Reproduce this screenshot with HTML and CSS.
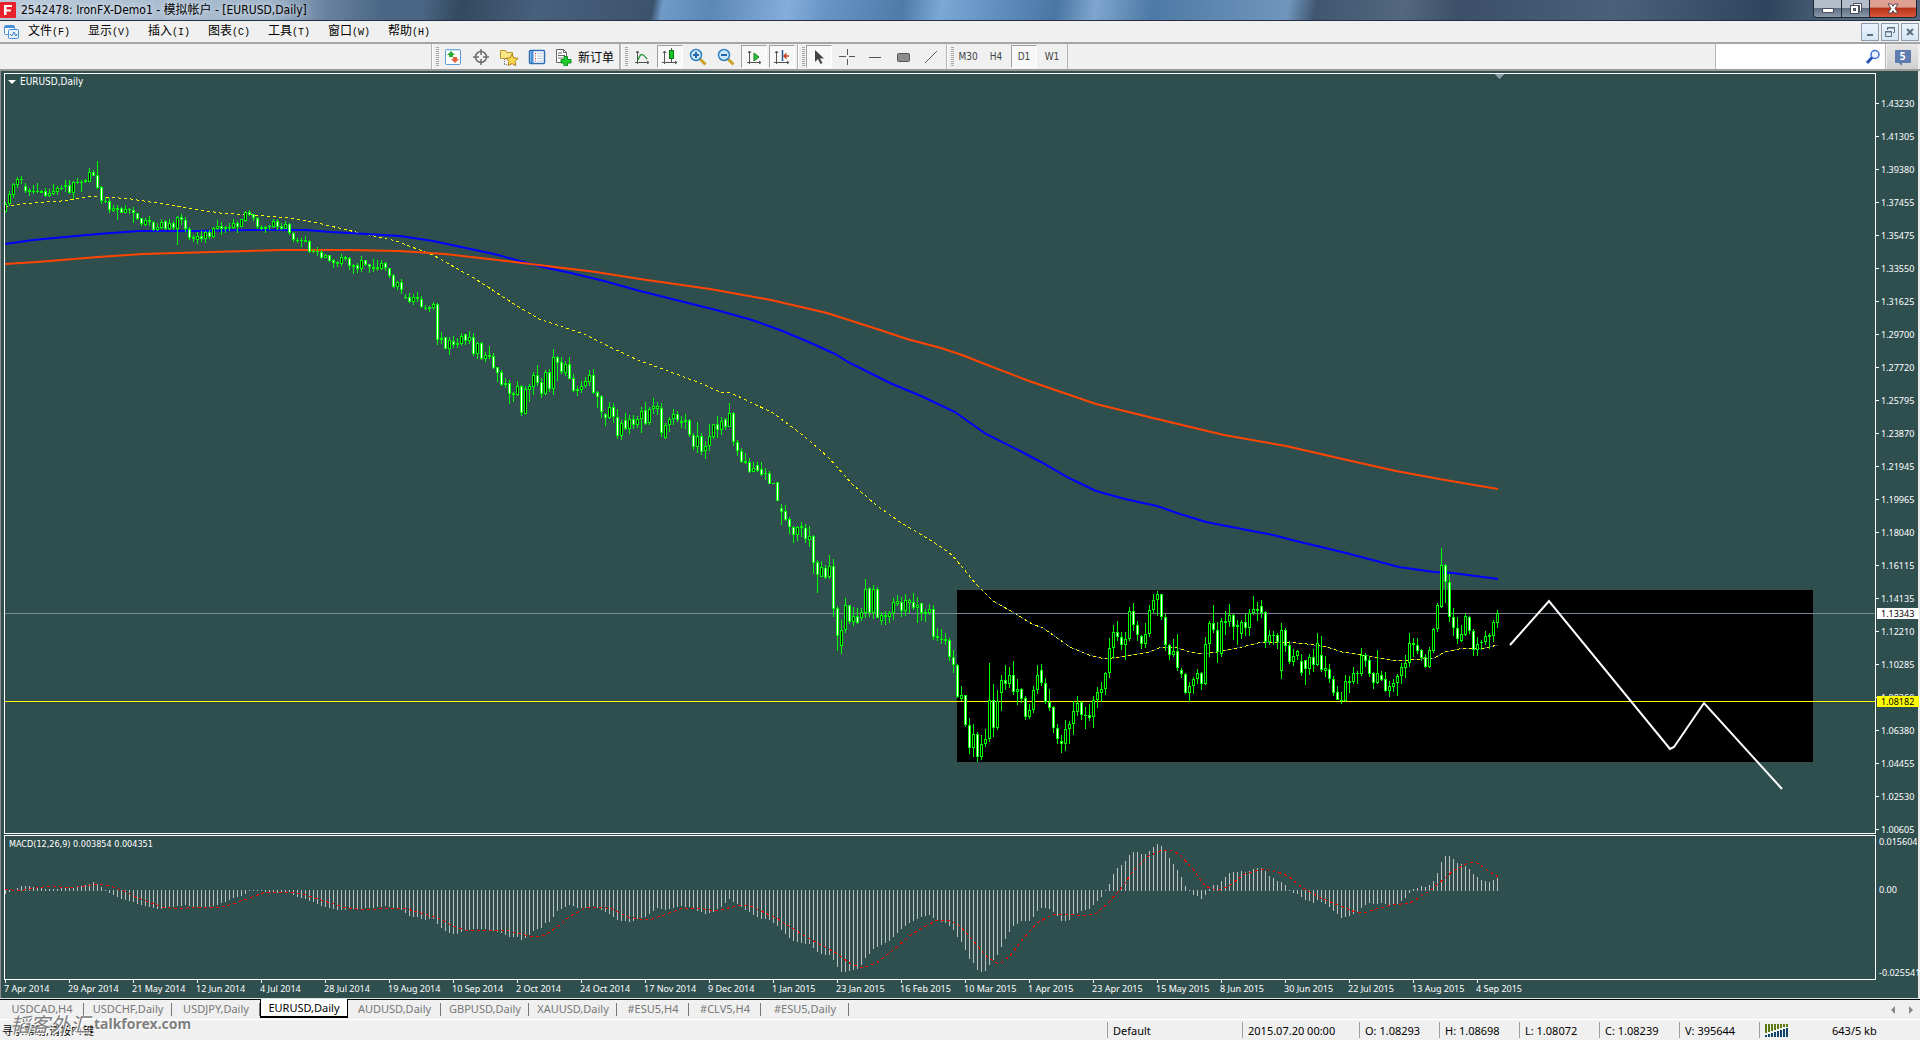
FILE: index.html
```html
<!DOCTYPE html>
<html lang="zh-CN">
<head>
<meta charset="utf-8">
<title>2542478: IronFX-Demo1 - 模拟帐户 - [EURUSD,Daily]</title>
<link rel="stylesheet" href="styles.css">
</head>
<body>
<div class="app">
  <header class="titlebar">
    <svg class="app-icon" viewBox="0 0 16 16" width="16" height="16"><rect width="16" height="16" rx="1" fill="#e8202c"/><path d="M4 3h8v2H6.500v2.500H11v2H6.500V13H4z" fill="#fff"/></svg>
    <h1 class="title">2542478: IronFX-Demo1 - 模拟帐户 - [EURUSD,Daily]</h1>
    <div class="window-buttons">
      <button class="wb" aria-label="最小化"><svg width="14" height="12" viewBox="0 0 14 12"><rect x="1.500" y="5.500" width="11" height="4" fill="#fff" stroke="#4a5060"/></svg></button>
      <button class="wb" aria-label="还原"><svg width="14" height="14" viewBox="0 0 14 14"><path d="M4.500 1.500h8v8h-2v-6h-6z" fill="#fff" stroke="#4a5060"/><rect x="1.500" y="3.500" width="8" height="8" fill="#fff" stroke="#4a5060"/><rect x="4.500" y="6.500" width="2" height="2" fill="#8a94a6" stroke="#4a5060"/></svg></button>
      <button class="wb wb-close" aria-label="关闭"><svg width="14" height="12" viewBox="0 0 14 12"><path d="M2 1h3.500L7 3.300 8.500 1H12L9 5.500l3 4.500H8.500L7 7.700 5.500 10H2l3-4.500z" fill="#fff" stroke="#5a4048"/></svg></button>
    </div>
  </header>

  <nav class="menubar">
    <svg class="doc-icon" width="16" height="16" viewBox="0 0 16 16"><rect x=".5" y="1.500" width="10" height="9" rx="1" fill="#fff" stroke="#4a90d9"/><path d="M1 3h9" stroke="#4a90d9" stroke-width="2"/><rect x="4.500" y="5.500" width="10" height="9" rx="1" fill="#e8f2fc" stroke="#4a90d9"/><path d="M6 10l2 2 2-4 2 4 1-2" fill="none" stroke="#3c7cc8"/></svg>
    <button class="menu">文件<span class="key">(F)</span></button>
    <button class="menu">显示<span class="key">(V)</span></button>
    <button class="menu">插入<span class="key">(I)</span></button>
    <button class="menu">图表<span class="key">(C)</span></button>
    <button class="menu">工具<span class="key">(T)</span></button>
    <button class="menu">窗口<span class="key">(W)</span></button>
    <button class="menu">帮助<span class="key">(H)</span></button>
    <div class="mdi-buttons">
      <button class="mdi" aria-label="最小化图表"><svg width="12" height="12" viewBox="0 0 12 12"><path d="M3 9h6" stroke="#5c6f80" stroke-width="2"/></svg></button>
      <button class="mdi" aria-label="还原图表"><svg width="12" height="12" viewBox="0 0 12 12"><path d="M3.500 4V1.500h7v5H9M3 2h8M1.500 5.500h6v5h-6zM1 6h7" fill="none" stroke="#5c6f80"/></svg></button>
      <button class="mdi" aria-label="关闭图表"><svg width="12" height="12" viewBox="0 0 12 12"><path d="M3 3l6 6M9 3l-6 6" stroke="#5c6f80" stroke-width="2"/></svg></button>
    </div>
  </nav>

  <div class="toolbar">
    <div class="group group-first">
      <span class="grip"></span>
      <button class="tool" aria-label="市场报价"><svg width="18" height="18" viewBox="0 0 18 18"><rect x="1.500" y="1.500" width="15" height="15" rx="1" fill="#fff" stroke="#5b9ad5"/><path d="M2 2h14" stroke="#8fc0ea"/><path d="M7 3l4 4H9v2H5V7H3z" fill="#2fae3c"/><path d="M11 15l4-4h-2V9H9v2H7z" fill="#e2603c"/></svg></button>
      <button class="tool" aria-label="数据窗口"><svg width="18" height="18" viewBox="0 0 18 18"><circle cx="9" cy="9" r="5.500" fill="none" stroke="#6c6c6c" stroke-width="1.500"/><path d="M9 1v6M9 11v6M1 9h6M11 9h6" stroke="#6c6c6c" stroke-width="1.500"/></svg></button>
      <button class="tool" aria-label="导航"><svg width="20" height="18" viewBox="0 0 20 18"><path d="M1.500 2.500h5l1 2h6v6h-12z" fill="#fbe68a" stroke="#b8962c"/><path d="M5.500 11v6M5 16.500h5" stroke="#777" stroke-dasharray="1 1"/><path d="M13 6l1.800 3.800 4.200.6-3 3 .8 4.200L13 15.600 9.200 17.600l.8-4.200-3-3 4.200-.6z" fill="#fcd94c" stroke="#a8801c"/></svg></button>
      <button class="tool" aria-label="终端"><svg width="18" height="18" viewBox="0 0 18 18"><rect x="1.500" y="2.500" width="15" height="13" rx="1" fill="#fff" stroke="#2f6fb5" stroke-width="1.500"/><path d="M4 3v12" stroke="#4a90d9" stroke-width="3"/><path d="M7 5.500h1M7 8h1M7 10.500h1M7 13h1" stroke="#e03030"/><path d="M9 5.500h6M9 8h6M9 10.500h6M9 13h6" stroke="#b8cbe2"/></svg></button>
      <button class="tool tool-order"><svg width="18" height="18" viewBox="0 0 18 18"><path d="M2.500 1.500h7l3 3v10h-10z" fill="#fff" stroke="#666"/><path d="M9.500 1.500v3h3M4 5h4M4 7.500h7M4 10h5" fill="none" stroke="#666"/><path d="M10 8.500h3.500v3H17V15h-3.500v3H10v-3H7v-3.500h3z" fill="#1fcf2f" stroke="#118a1c"/></svg>新订单</button>
    </div>
    <div class="group">
      <span class="grip"></span>
      <button class="tool" aria-label="折线图"><svg width="18" height="18" viewBox="0 0 18 18"><path d="M4.500 3v13M2 14.500h14M3 5l1.500-2L6 5M14 13l2 1.500-2 1.500" fill="none" stroke="#555"/><path d="M5 12c3-8 5-6 9-1" fill="none" stroke="#2a9c3a" stroke-width="1.500"/></svg></button>
      <button class="tool pressed" aria-label="蜡烛图"><svg width="18" height="18" viewBox="0 0 18 18"><path d="M3.500 3v13M1 14.500h15M2 5l1.500-2L5 5M14 13l2 1.500-2 1.500M10.500 0v14" fill="none" stroke="#555"/><rect x="8.500" y="2.500" width="4" height="8" fill="#16c42a" stroke="#0b7a17"/></svg></button>
      <button class="tool" aria-label="放大"><svg width="18" height="18" viewBox="0 0 18 18"><path d="M10 10l6.500 6.500" stroke="#c9a227" stroke-width="3"/><circle cx="7" cy="7" r="5.500" fill="#cfe9fb" stroke="#2c7fc0" stroke-width="1.500"/><path d="M4 7h6M7 4v6" stroke="#2068a8" stroke-width="2"/></svg></button>
      <button class="tool" aria-label="缩小"><svg width="18" height="18" viewBox="0 0 18 18"><path d="M10 10l6.500 6.500" stroke="#c9a227" stroke-width="3"/><circle cx="7" cy="7" r="5.500" fill="#cfe9fb" stroke="#2c7fc0" stroke-width="1.500"/><path d="M4 7h6" stroke="#2068a8" stroke-width="2"/></svg></button>
      <button class="tool pressed" aria-label="自动滚动"><svg width="18" height="18" viewBox="0 0 18 18"><path d="M4.500 3v13M2 14.500h14M3 5l1.500-2L6 5M14 13l2 1.500-2 1.500" fill="none" stroke="#555"/><path d="M9 5l5 4-5 4z" fill="#2fc23c" stroke="#178022"/></svg></button>
      <button class="tool pressed" aria-label="图表平移"><svg width="18" height="18" viewBox="0 0 18 18"><path d="M3.500 3v13M1 14.500h15M2 5l1.500-2L5 5M14 13l2 1.500-2 1.500" fill="none" stroke="#555"/><path d="M9.500 2v11" stroke="#1d5c9c" stroke-width="1.500"/><path d="M11 8h5M13.500 5.500L11 8l2.500 2.500" fill="none" stroke="#c8401c" stroke-width="1.500"/></svg></button>
    </div>
    <div class="group">
      <span class="grip"></span>
      <button class="tool pressed" aria-label="光标"><svg width="18" height="18" viewBox="0 0 18 18"><path d="M5 2v12l3-3 2.500 5 2-1L10 10.500h4z" fill="#444"/></svg></button>
      <button class="tool" aria-label="十字准线"><svg width="18" height="18" viewBox="0 0 18 18"><path d="M9.500 1v6M9.500 11v6M1 8.500h7M11 8.500h6" stroke="#555"/></svg></button>
      <button class="tool" aria-label="水平线"><svg width="18" height="18" viewBox="0 0 18 18"><path d="M3 9.500h12" stroke="#555" stroke-width="1"/></svg></button>
      <button class="tool" aria-label="矩形"><svg width="18" height="18" viewBox="0 0 18 18"><rect x="3.500" y="5.500" width="12" height="8" rx="1" fill="#8c8c8c" stroke="#555"/></svg></button>
      <button class="tool" aria-label="趋势线"><svg width="18" height="18" viewBox="0 0 18 18"><path d="M3 15L15 3" stroke="#666"/></svg></button>
    </div>
    <div class="group group-last">
      <span class="grip"></span>
      <button class="tool">M30</button>
      <button class="tool">H4</button>
      <button class="tool pressed">D1</button>
      <button class="tool">W1</button>
    </div>
    <label class="search">
      <input type="text" aria-label="搜索">
      <svg width="16" height="16" viewBox="0 0 16 16"><circle cx="10" cy="5.500" r="4" fill="#eaf2ff" stroke="#3f6fd0" stroke-width="1.500"/><path d="M7 8.500L2 14" stroke="#2a55b8" stroke-width="3"/></svg>
    </label>
    <button class="chat" aria-label="消息"><span class="bubble">5</span></button>
  </div>

  <main class="chart">
    <section class="pane price-pane">
      <h2 class="pane-title symbol"><span class="arrow"></span>EURUSD,Daily</h2>
      <svg id="price" class="plot" viewBox="5 74 1870 759" preserveAspectRatio="none"></svg>
    </section>
    <div class="axis price-axis">
      <ol class="prices">
        <li>1.43230</li><li>1.41305</li><li>1.39380</li><li>1.37455</li><li>1.35475</li><li>1.33550</li><li>1.31625</li><li>1.29700</li><li>1.27720</li><li>1.25795</li><li>1.23870</li><li>1.21945</li><li>1.19965</li><li>1.18040</li><li>1.16115</li><li>1.14135</li><li>1.12210</li><li>1.10285</li><li>1.08360</li><li>1.06380</li><li>1.04455</li><li>1.02530</li><li>1.00605</li>
      </ol>
      <span class="tag tag-bid">1.13343</span>
      <span class="tag tag-line">1.08182</span>
    </div>
    <section class="pane macd-pane">
      <h2 class="pane-title">MACD(12,26,9) 0.003854 0.004351</h2>
      <svg id="macd" class="plot" viewBox="5 836 1870 143" preserveAspectRatio="none"></svg>
    </section>
    <div class="axis macd-axis"><span>0.015604</span><span class="zero">0.00</span><span>-0.025541</span></div>
    <ol class="dates">
      <li>7 Apr 2014</li><li>29 Apr 2014</li><li>21 May 2014</li><li>12 Jun 2014</li><li>4 Jul 2014</li><li>28 Jul 2014</li><li>19 Aug 2014</li><li>10 Sep 2014</li><li>2 Oct 2014</li><li>24 Oct 2014</li><li>17 Nov 2014</li><li>9 Dec 2014</li><li>1 Jan 2015</li><li>23 Jan 2015</li><li>16 Feb 2015</li><li>10 Mar 2015</li><li>1 Apr 2015</li><li>23 Apr 2015</li><li>15 May 2015</li><li>8 Jun 2015</li><li>30 Jun 2015</li><li>22 Jul 2015</li><li>13 Aug 2015</li><li>4 Sep 2015</li>
    </ol>
  </main>

  <div class="tabs">
    <button class="tab">USDCAD,H4</button>
    <button class="tab">USDCHF,Daily</button>
    <button class="tab">USDJPY,Daily</button>
    <button class="tab active">EURUSD,Daily</button>
    <button class="tab wide">AUDUSD,Daily</button>
    <button class="tab">GBPUSD,Daily</button>
    <button class="tab">XAUUSD,Daily</button>
    <button class="tab short">#ESU5,H4</button>
    <button class="tab short">#CLV5,H4</button>
    <button class="tab">#ESU5,Daily</button>
    <div class="tab-scroll">
      <button aria-label="向左滚动"><svg width="4" height="8" viewBox="0 0 4 8"><path d="M4 0v8L0 4z" fill="#888"/></svg></button>
      <button aria-label="向右滚动"><svg width="4" height="8" viewBox="0 0 4 8"><path d="M0 0v8l4-4z" fill="#888"/></svg></button>
    </div>
  </div>

  <footer class="status">
    <span class="help">寻求帮助,请按F1键</span>
    <span class="cell c-profile">Default</span>
    <span class="cell c-time">2015.07.20 00:00</span>
    <span class="cell c-num">O: 1.08293</span>
    <span class="cell c-num">H: 1.08698</span>
    <span class="cell c-num">L: 1.08072</span>
    <span class="cell c-num">C: 1.08239</span>
    <span class="cell c-num">V: 395644</span>
    <span class="cell c-net"><svg width="24" height="13" viewBox="0 0 24 13" shape-rendering="crispEdges"><path d="M1 0v9M4 0v8M7 0v7M10 0v6M13 0v5M16 0v4M19 0v3M22 0v3" stroke="#5c7a12" stroke-width="2"/><path d="M1 11v2M4 10v3M7 9v4M10 8v5M13 7v6M16 6v7M19 5v8M22 4v9" stroke="#0f4468" stroke-width="2"/></svg><span>643/5 kb</span></span>
    <div class="watermark"><span class="wm-cn">韬客外汇</span><span class="wm-en">talkforex.com</span></div>
  </footer>
</div>
<script src="chart.js"></script>
</body>
</html>
```
FILE: styles.css
```css
* { box-sizing: border-box; }
body, h1, h2, ol { margin: 0; padding: 0; }
ol { list-style: none; }
body {
  font-family: "Open Sans", "Noto Sans CJK SC", sans-serif;
  font-size: 12px;
  color: #000;
  background: #f0f0f0;
}
button { margin: 0; padding: 0; border: 0; background: none; font: inherit; color: inherit; }
.app { display: flex; flex-direction: column; min-height: 100vh; }

.titlebar {
  display: flex;
  align-items: center;
  height: 21px;
  border-bottom: 1px solid #22303f;
  background:
    linear-gradient(90deg, rgba(215,228,240,.8) 0, rgba(190,208,226,.75) 14%, rgba(150,172,198,.4) 17%, transparent 20%),
    linear-gradient(100deg, #4a6684 0, #4a6684 22%, #34495f 24%, #47607c 28%, #3c536d 34%, #6f9bc8 34.500%, #5c88b6 37%, #84addb 41%, #6794c4 43%, #4f7ba9 47%, #7ba9d6 49%, #5f8dbd 52%, #4a76a4 55%, #7ea6cf 57%, #4d79a6 60%, #7096bd 67%, #40566f 68.500%, #53687f 73%, #3b5068 76%, #4b6179 84%, #2f455d 92%, #53687f 96%);
}
.app-icon { flex: none; margin-right: 5px; }
.title { flex: 1; font-family: "DejaVu Sans Condensed", "Noto Sans CJK SC", sans-serif; font-size: 12px; font-weight: 400; line-height: 18px; white-space: nowrap; text-shadow: 0 0 6px #fff; }
.window-buttons {
  display: flex;
  align-self: flex-start;
  height: 18px;
  margin-right: 3px;
  border: 1px solid #1d2733;
  border-top: 0;
  border-radius: 0 0 4px 4px;
  overflow: hidden;
}
.wb { display: flex; align-items: center; justify-content: center; width: 28px; background: linear-gradient(#b3bdc9 0 45%, #5f6f82 50%, #8c9aaa); border-right: 1px solid #1d2733; }
.wb-close { width: 46px; border-right: 0; background: linear-gradient(#dda091 0 40%, #b9321c 50%, #d9583a); }

.menubar { display: flex; align-items: center; height: 21px; padding: 0 1px 0 4px; }
.doc-icon { flex: none; margin-right: 8px; }
.menu { width: 60px; text-align: left; font-family: "Noto Sans CJK SC", sans-serif; font-size: 12px; line-height: 18px; }
.key { font-family: "Liberation Mono", monospace; font-size: 10px; }
.mdi-buttons { display: flex; gap: 2px; margin-left: auto; }
.mdi { display: flex; align-items: center; justify-content: center; width: 18px; height: 18px; border: 1px solid #8e9ba8; background: linear-gradient(#eaf3fb, #d5e6f5); }

.toolbar { display: flex; height: 29px; border-top: 2px solid #a6a6a6; border-bottom: 2px solid #9a9a9a; }
.group { display: flex; align-items: center; padding: 0 1px 0 4px; border-left: 1px solid #b4b4b4; box-shadow: inset 1px 0 #fff; }
.group-first { width: 189px; margin-left: 431px; border-right: 1px solid #b4b4b4; }
.group-last { border-right: 1px solid #b4b4b4; }
.grip { width: 3px; height: 20px; background: repeating-linear-gradient(#a8a8a8 0 1px, transparent 1px 2px); }
.tool { display: flex; align-items: center; justify-content: center; width: 26px; height: 23px; margin: 0 1px; border: 1px solid transparent; font-family: "DejaVu Sans Condensed", "Noto Sans CJK SC", sans-serif; font-size: 10px; color: #444; }
.tool-order { width: 66px; gap: 6px; margin: 0; font-family: "Noto Sans CJK SC", sans-serif; font-size: 12px; color: #000; white-space: nowrap; }
.pressed { border-color: #a0a0a0 #fff #fff #a0a0a0; background: #f8f8f8; }
.search { display: flex; align-items: center; width: 171px; margin-left: auto; padding-right: 4px; border: 1px solid #b8b8b8; border-width: 0 1px; background: #fff; }
.search input { flex: 1; min-width: 0; height: 20px; border: 0; outline: 0; background: transparent; }
.chat { display: flex; align-items: center; justify-content: center; width: 31px; margin: 0 2px 0 1px; background: linear-gradient(#e6e6e6, #cfcfcf); }
.bubble { position: relative; width: 16px; height: 13px; border-radius: 1px; background: #5f7cae; color: #fff; font-size: 10px; font-weight: 700; line-height: 13px; }
.bubble::after { content: ""; position: absolute; left: 3px; top: 12px; border: 2px solid transparent; border-top-color: #5f7cae; border-right-color: #5f7cae; }

.chart {
  flex: 1;
  display: grid;
  grid-template-columns: 1fr 42px;
  grid-template-rows: 1fr 145px 17px;
  row-gap: 1px;
  padding: 2px 0 0 4px;
  border-right: 2px solid #e8e8e8;
  border-bottom: 1px solid #d8e8e8;
  background: #2f4f4f;
  box-shadow: inset 1px 0 #8c8c8c;
  color: #fff;
  font-family: "Noto Sans", sans-serif;
  font-size: 9px;
}
.pane { position: relative; border: 1px solid #fff; min-width: 0; min-height: 0; }
.pane-title { position: absolute; left: 4px; top: 1px; display: flex; align-items: center; gap: 4px; font-family: "DejaVu Sans Condensed", sans-serif; font-size: 9px; font-weight: 400; line-height: 14px; white-space: nowrap; }
.pane-title.symbol { left: 3px; font-size: 10px; }
.arrow { border: 4px solid transparent; border-top-color: #fff; border-bottom: 0; }
.plot { display: block; width: 100%; height: 100%; }
.axis { position: relative; }
.prices { padding-top: 14px; height: 0; }
.prices li { display: flex; align-items: center; height: 33px; gap: 2px; }
.prices li::before { content: ""; width: 3px; height: 1px; background: #fff; }
.tag { position: absolute; left: 1px; right: -1px; height: 11px; padding-left: 4px; line-height: 11px; color: #000; }
.tag-bid { top: 535px; background: #fff; }
.tag-line { top: 623px; background: #ff0; }
.macd-axis { display: flex; flex-direction: column; justify-content: space-between; padding-left: 3px; line-height: 14px; white-space: nowrap; }
.zero { margin-top: 11px; margin-bottom: 46px; }
.dates { grid-column: 1 / -1; display: flex; line-height: 14px; }
.dates li { width: 64px; flex: none; white-space: nowrap; }
.dates li::before { content: ""; display: block; width: 1px; height: 3px; margin: -1px 0 -1px 1px; background: #fff; }

.tabs { display: flex; height: 21px; border-top: 1px solid #000; border-bottom: 1px solid #fff; font-size: 11px; color: #777; }
.tab { position: relative; width: 88px; height: 18px; line-height: 16px; font-family: "Noto Sans", sans-serif; white-space: nowrap; }
.tab:first-child { width: 84px; }
.tab::after { content: ""; position: absolute; right: 0; top: 3px; width: 1px; height: 13px; background: #777; }
.tab.wide { width: 93px; }
.tab.short { width: 72px; }
.tab.active { margin-top: -1px; height: 19px; background: #fff; color: #000; border: 1px solid #000; border-top: 0; border-bottom-width: 2px; }
.tab.active::after { display: none; }
.tab-scroll { display: flex; gap: 14px; align-items: center; margin-left: auto; padding-right: 7px; }
.tab-scroll button { display: flex; }

.status { position: relative; display: flex; align-items: center; height: 20px; font-family: "Noto Sans", "Noto Sans CJK SC", sans-serif; font-size: 11px; white-space: nowrap; }
.help { flex: 1; padding-left: 2px; }
.cell { display: flex; align-items: center; height: 16px; padding-left: 5px; border-left: 1px solid #a0a0a0; }
.c-profile { width: 135px; }
.c-time { width: 117px; }
.c-num { width: 80px; }
.c-net { width: 161px; gap: 43px; }
.watermark { position: absolute; left: 10px; bottom: 6px; display: flex; align-items: center; gap: 4px; color: #808080; text-shadow: 0 0 2px #fff, 1px 1px 0 #fff; line-height: 20px; }
.wm-cn { font-family: "Noto Sans CJK SC", sans-serif; font-size: 20px; font-style: italic; }
.wm-en { font-size: 14px; font-weight: 700; }
```
FILE: chart.js
```js
// Candles, four pixels apart: high, body top, body bottom, low (in thirds of a
// pixel below the block's base) and d for a falling day.
const blocks = [
  { base: 130, rows: `215,222,245,245 183,193,223,228 158,163,194,203 141,147,164,174 138,147,150,162 159,168,182,188d 174,181,185,198 165,183,186,191 159,183,186,189 179,183,188,189
174,184,198,201d 177,189,197,201 162,183,192,194 168,175,185,195 165,174,177,179 150,166,171,186 150,166,188,192d 153,157,188,207 144,156,159,162 150,156,158,186
147,149,155,159d 114,126,155,157 120,127,137,139d 93,136,173,177d 168,172,214,222d 201,213,217,219 203,214,241,249d 225,235,242,246 225,235,239,270 230,235,248,249d
225,237,248,249 234,237,241,252 231,241,250,279d 248,250,266,270d 264,265,281,288d 264,271,284,288 258,271,277,287d 272,277,299,303d 279,290,299,302 267,277,294,296
270,273,296,300d 267,280,297,300 274,280,295,300d 258,262,296,345 252,262,271,285d 261,271,298,305d 291,298,323,329d 315,321,328,335d 306,319,329,342 304,318,327,336d
303,307,326,339 300,306,322,327d 291,295,322,323 270,289,297,300 276,289,297,314d 288,291,297,308 280,291,294,303 268,280,294,297 274,280,291,309d 267,268,290,292
244,247,272,276 240,246,254,258d 252,253,265,272d 260,265,290,297d 285,290,298,301d 288,291,298,308 285,289,291,300 267,273,290,293 267,273,290,300d 279,289,296,300d
273,283,296,298 279,283,310,315d 306,309,331,335d 324,330,332,338 324,330,333,350 318,330,335,337 330,333,366,369d 358,363,366,370 351,363,366,377 360,366,383,387d
372,375,384,385 374,376,392,397d 387,391,398,414d 393,397,401,410 372,381,402,408 378,381,386,392d 381,384,409,419d 402,405,410,432 399,405,416,429d 378,391,416,426
390,391,404,407d 402,403,412,429d 387,411,416,425 390,411,416,423 390,398,416,420 396,399,415,422d 413,415,437,443d 432,436,470,474d 453,457,470,480 447,457,479,492d
492,501,504,507 489,502,515,519d 492,502,515,525 486,502,508,516d 498,507,532,533d 525,533,537,539 528,531,537,546 516,523,533,540 519,523,629,645d 606,624,629,641
621,622,656,658d 621,630,656,675 618,633,645,654d 624,639,644,654 609,619,641,649 612,613,632,646d 603,621,632,642 609,621,671,677d 636,639,671,687 636,639,688,690d
666,676,687,696 648,675,680,687 669,679,713,717d 711,712,728,756d 720,727,764,768d 744,759,764,774 750,760,791,822d 786,789,794,815 753,769,794,798 765,769,848,858d
768,778,851,852 762,769,779,816 726,736,770,795 705,736,758,768d 744,757,791,804d 720,727,791,795 717,727,776,786d 657,682,776,795 678,682,698,753d 681,697,725,732d
693,703,728,738 681,703,746,747d 732,745,782,786d 768,777,782,798 753,769,781,788 741,754,768,774 720,736,755,768 717,736,788,792d 783,786,800,834d 795,799,845,864d` },
  { base: 330, rows: `249,253,265,288d 216,232,265,266 220,232,262,279d 237,262,319,326d 270,280,319,330 249,271,296,300d 255,268,296,312 255,268,286,297d 258,268,286,295 231,244,268,309
216,241,281,285d 231,238,280,285 204,229,238,252 216,229,236,255 219,235,310,321d 280,286,325,327 261,268,286,306 237,253,268,285 243,253,271,276d 258,273,280,294
252,271,276,297 268,271,316,321d 310,316,352,360d 276,319,352,369 309,319,367,375d 333,349,364,387 282,319,349,362 282,283,320,326 258,283,301,324d 261,274,301,315
264,268,290,300d 219,250,290,291 246,250,337,348d 330,337,364,378d 354,364,395,399d 369,393,398,402 384,395,425,429d 396,415,425,426 396,405,422,426d 396,418,434,437d
414,429,433,450 423,430,461,462d 459,459,462,462 456,457,512,513d 522,535,545,585d 525,544,569,573d 562,568,592,612d 588,592,616,639d 588,592,616,633 576,589,595,621
582,595,628,639d 588,619,629,651 615,619,698,732d 690,697,734,789d 693,712,740,741 705,715,743,747d 675,709,740,747 687,709,836,861d 828,835,917,963d 870,901,947,972
804,826,901,909 825,826,875,882d 831,859,875,888 834,859,878,882d 834,847,863,872 747,778,848,864 771,775,850,861d 765,778,848,867 771,778,863,864d 846,856,872,885
842,855,860,885 843,850,860,879 804,817,850,870 795,814,821,828 801,817,842,861d 792,811,842,858 807,811,818,850 789,817,833,839d 801,826,833,879 819,820,850,873d
837,847,851,876 822,838,848,855 825,838,920,930d 894,918,923,933 897,927,930,942 909,927,932,945 924,931,982,993d 960,982,1006,1029d 1002,1006,1102,1104d 1068,1096,1108,1113
1096,1096,1186,1191d` },
  { base: 530, rows: `564,586,653,672d 582,613,653,680 606,613,680,696d 615,643,682,690 597,628,643,651 399,511,628,636 462,511,595,621d 480,514,595,600 435,451,490,543
405,451,463,480d 411,436,463,474 393,436,485,495d 447,478,485,525 474,478,506,518d 498,505,560,570d 522,541,560,567 468,481,541,549 405,436,481,492 402,421,460,468d
444,460,517,522d 477,515,533,543d 528,532,595,609d 582,595,626,642d 615,634,643,669d 570,598,643,662 573,583,598,642 514,544,583,615 498,519,545,558 513,515,556,570d
531,554,558,597 522,556,563,573d 498,511,562,594 471,487,511,534 456,478,490,516 426,430,478,495 324,355,430,444 285,307,355,387 273,307,322,333d 306,321,346,360d
306,328,346,390 231,244,328,333 219,244,286,303d 273,286,314,333d 315,318,343,357d 279,313,343,354 225,241,313,321 192,211,241,249 183,193,211,258 192,193,260,270d
252,261,346,363d 342,345,374,390d 327,364,374,381 312,364,415,423d 414,420,433,444d 429,433,488,492d 456,469,488,516 441,448,469,492 417,430,448,462 426,430,461,480d
321,343,461,465 273,280,343,381 225,280,301,309d 276,301,367,399d 264,274,373,381 243,273,278,315 222,256,277,291 252,256,290,330d 270,286,290,345 270,277,313,327
252,277,295,318d 237,250,295,318 198,238,250,255 216,237,242,273 210,229,248,264d 243,247,337,354d 300,316,337,345 303,315,318,345 309,316,337,357d 279,301,422,447
294,301,349,366d 333,346,395,402d 357,379,395,408 360,364,379,390 372,394,430,438d 390,391,416,465d 372,382,416,435 357,382,404,426d 309,340,404,408 318,376,419,426d
378,415,422,441 402,418,448,459d 438,448,488,498d 468,485,509,510d 486,509,514,522 435,454,512,516 438,454,458,489 411,430,457,462 423,430,433,462 354,374,431,437
369,376,392,411d 378,391,431,441d 426,430,458,477d 360,430,458,462 423,436,449,453d 426,448,482,486d 453,469,482,501 447,460,470,486 432,439,460,498 399,412,439,462
375,400,413,444 309,340,400,411 324,340,346,381d 324,346,364,372d 357,361,383,392d 372,382,410,414d 351,361,410,414 294,298,362,369 219,226,298,306 54,106,230,234
102,106,157,219d 132,157,262,276d 234,262,295,318d 262,295,328,342d 285,313,334,336 249,259,316,318 258,262,304,312d 297,304,359,378d 321,343,359,378 330,335,338,360
303,318,335,345 309,315,320,357 270,277,317,336 240,250,278,294` }
];

const slow = "5,264 37,262 98,257 143,254 212,252 282,250 351,250 400,251 445,254 506,261 547,266 596,272 640,279 710,289 771,300 827,313 880,330 907,339 941,348 962,355 990,366 1029,381 1096,404 1157,419 1224,435 1286,446 1347,460 1396,471 1445,480 1498,489";
const fast = "5,244 33,240 65,237 98,234 139,231 196,231 249,230 306,230 331,232 367,234 400,236 433,241 461,247 494,254 531,264 547,268 571,273 604,281 640,291 680,301 720,311 752,320 780,330 811,343 835,354 848,362 890,383 921,396 955,412 969,422 986,434 1020,451 1041,462 1069,478 1096,491 1125,499 1157,506 1180,514 1206,522 1242,529 1273,535 1300,542 1346,553 1399,567 1434,572 1453,573 1498,579";
const dotted = "5,207 20,204 61,201 94,196 131,199 163,204 220,213 253,215 290,218 322,224 347,230 396,241 433,255 474,278 514,304 539,319 584,334 612,348 640,361 660,368 700,383 720,392 731,393 773,413 804,436 828,457 852,484 876,505 900,522 938,545 952,555 962,567 976,584 993,601 1016,614 1032,624 1043,628 1070,647 1089,655 1105,659 1120,657 1149,652 1162,647 1174,647 1187,651 1200,654 1218,652 1242,647 1262,642 1284,642 1307,644 1327,647 1342,652 1369,656 1395,661 1434,658 1445,652 1464,648 1480,649 1498,645";
const overview = (a, x0) => a.split(" ").map(p => { const [x, y] = p.split(",").map(Number); return [x0 + x / 1.6333, 820 + y / 3]; });

// Oscillator envelope and its signal line, as knots joined by straight runs.
const hist = [
  ...overview("8,222 15,216 22,212 28,204 35,197 60,201 75,207 93,206 119,204 139,195 152,186 165,201 172,213 185,225 198,237 217,246 230,255 256,267 275,264 300,255 320,262 345,261 362,249 382,234 395,228 408,212 420,212 434,216 445,219 473,216 480,228 498,237 525,258 550,269 577,268 603,264 629,258 642,264 655,270 668,288 681,292 694,300 707,297 720,324 733,339 745,342 765,330 780,327 797,328 817,338 830,350 845,351 852,360 862,351 870,333 884,324 890,309 897,306 904,288 910,273 917,267 930,255 943,264 956,264 969,258 982,270 995,282 1008,300 1028,306 1041,297 1053,291 1073,264 1086,270 1099,264 1112,258 1125,261 1151,282 1164,276 1177,261 1190,237 1210,261 1217,270 1230,285 1243,297 1256,300 1269,318 1282,342 1295,363 1308,369 1321,372 1334,396 1347,405 1355,405 1361,420 1368,444 1374,456 1387,453 1400,447 1407,435 1413,414 1426,387 1452,363 1465,339 1478,318 1491,303 1504,291 1517,285 1530,303 1543,309 1556,327 1563,351", 0),
  ...overview("2,366 8,390 15,417 22,429 28,450 35,456 41,453 48,432 61,405 74,354 87,318 100,303 113,303 120,291 126,273 133,264 146,267 152,276 165,303 178,300 185,285 198,273 211,267 224,243 231,231 237,213 244,189 250,162 257,144 270,123 276,105 283,96 290,96 296,102 303,102 316,81 322,72 329,78 335,93 342,117 348,132 355,153 362,174 368,201 375,213 381,225 388,228 394,237 401,225 407,207 414,195 420,195 433,171 440,159 460,153 466,156 479,147 486,144 492,144 499,153 505,168 518,183 525,186 531,195 538,212 544,219 551,222 564,240 577,249 584,240 597,252 610,273 623,294 636,288 649,276 656,261 669,249 675,252 688,249 701,255 714,252 727,234 734,216 740,207 753,198 760,201 766,195 773,183 779,159 786,123 793,105 799,108 812,129 825,138 832,147 838,162 852,180 865,186 871,180 878,174", 960)
];
const signal = [
  ...overview("8,206 20,211 40,211 80,199 115,203 160,193 180,197 200,211 225,235 265,260 290,266 320,262 362,262 385,250 430,219 470,216 500,226 565,264 600,270 640,264 665,267 715,295 740,318 765,333 825,331 870,350 890,346 910,322 930,291 955,264 980,261 1000,268 1025,290 1045,298 1065,298 1085,284 1115,265 1140,265 1170,272 1210,256 1230,262 1270,297 1320,355 1365,400 1390,432 1410,444 1430,430 1455,395 1490,342 1530,299 1550,300 1567,314", 0),
  ...overview("20,357 45,415 63,431 80,412 105,353 125,310 150,284 180,283 200,289 220,283 240,252 262,210 285,150 305,112 330,90 345,91 360,106 380,146 400,198 420,214 440,197 465,163 495,148 520,157 535,168 560,204 590,234 610,248 645,277 660,280 680,268 705,254 735,248 770,210 805,154 833,126 845,128 865,156 878,170", 960)
];

const rect = (x, y, w, h, fill) => `<rect x="${x}" y="${y}" width="${w}" height="${h}" fill="${fill}"/>`;
const line = (pts, color, width, extra = "") =>
  `<polyline points="${pts}" fill="none" stroke="${color}" stroke-width="${width}" ${extra}/>`;
const smooth = 'shape-rendering="geometricPrecision"';

let out = rect(957, 590, 856, 172, "#000");
out += line(dotted, "#2f4f4f", 1);
out += line(dotted, "#ff0", 1, 'stroke-dasharray="3 3"');
out += line(fast, "#00f", 2, smooth) + line(slow, "#ff4500", 2, smooth);
out += rect(5, 613, 1870, 1, "#778899") + rect(5, 701, 1870, 1, "#ff0");
let i = 0;
for (const block of blocks) {
  for (const row of block.rows.trim().split(/\s+/)) {
    const [h, t, b, l] = row.split(",").map(v => block.base + Math.round(parseInt(v, 10) / 3));
    const x = 5 + 4 * i++;
    out += rect(x, h, 1, Math.max(1, l - h), "#0f0");
    out += rect(x - 1, t, 3, Math.max(1, b - t), "#0f0");
    if (b - t > 2) out += rect(x, t + 1, 1, b - t - 2, row.endsWith("d") ? "#fff" : "#000");
  }
}
out += line("1510,645 1549,601 1670,749 1674,747 1704,703 1782,789", "#fff", 2, smooth);
out += '<path d="M1495 74h9l-4.500 5z" fill="#8a9aa4"/>';
document.getElementById("price").innerHTML = out;

out = "";
let k = 0;
for (let x = 5; x <= 1497; x += 4) {
  while (k < hist.length - 2 && hist[k + 1][0] < x) k++;
  const [x1, y1] = hist[k], [x2, y2] = hist[k + 1];
  const y = Math.round(y1 + (y2 - y1) * Math.min(1, Math.max(0, (x - x1) / (x2 - x1))));
  out += y > 890 ? rect(x, 890, 1, y - 890, "#c0c0c0") : rect(x, y, 1, 891 - y, "#c0c0c0");
}
out += line(signal.map(p => p.map(Math.round).join()).join(" "), "#f00", 1, 'stroke-dasharray="3 3"');
document.getElementById("macd").innerHTML = out;
document.querySelectorAll(".plot").forEach(s => s.setAttribute("shape-rendering", "crispEdges"));
```
